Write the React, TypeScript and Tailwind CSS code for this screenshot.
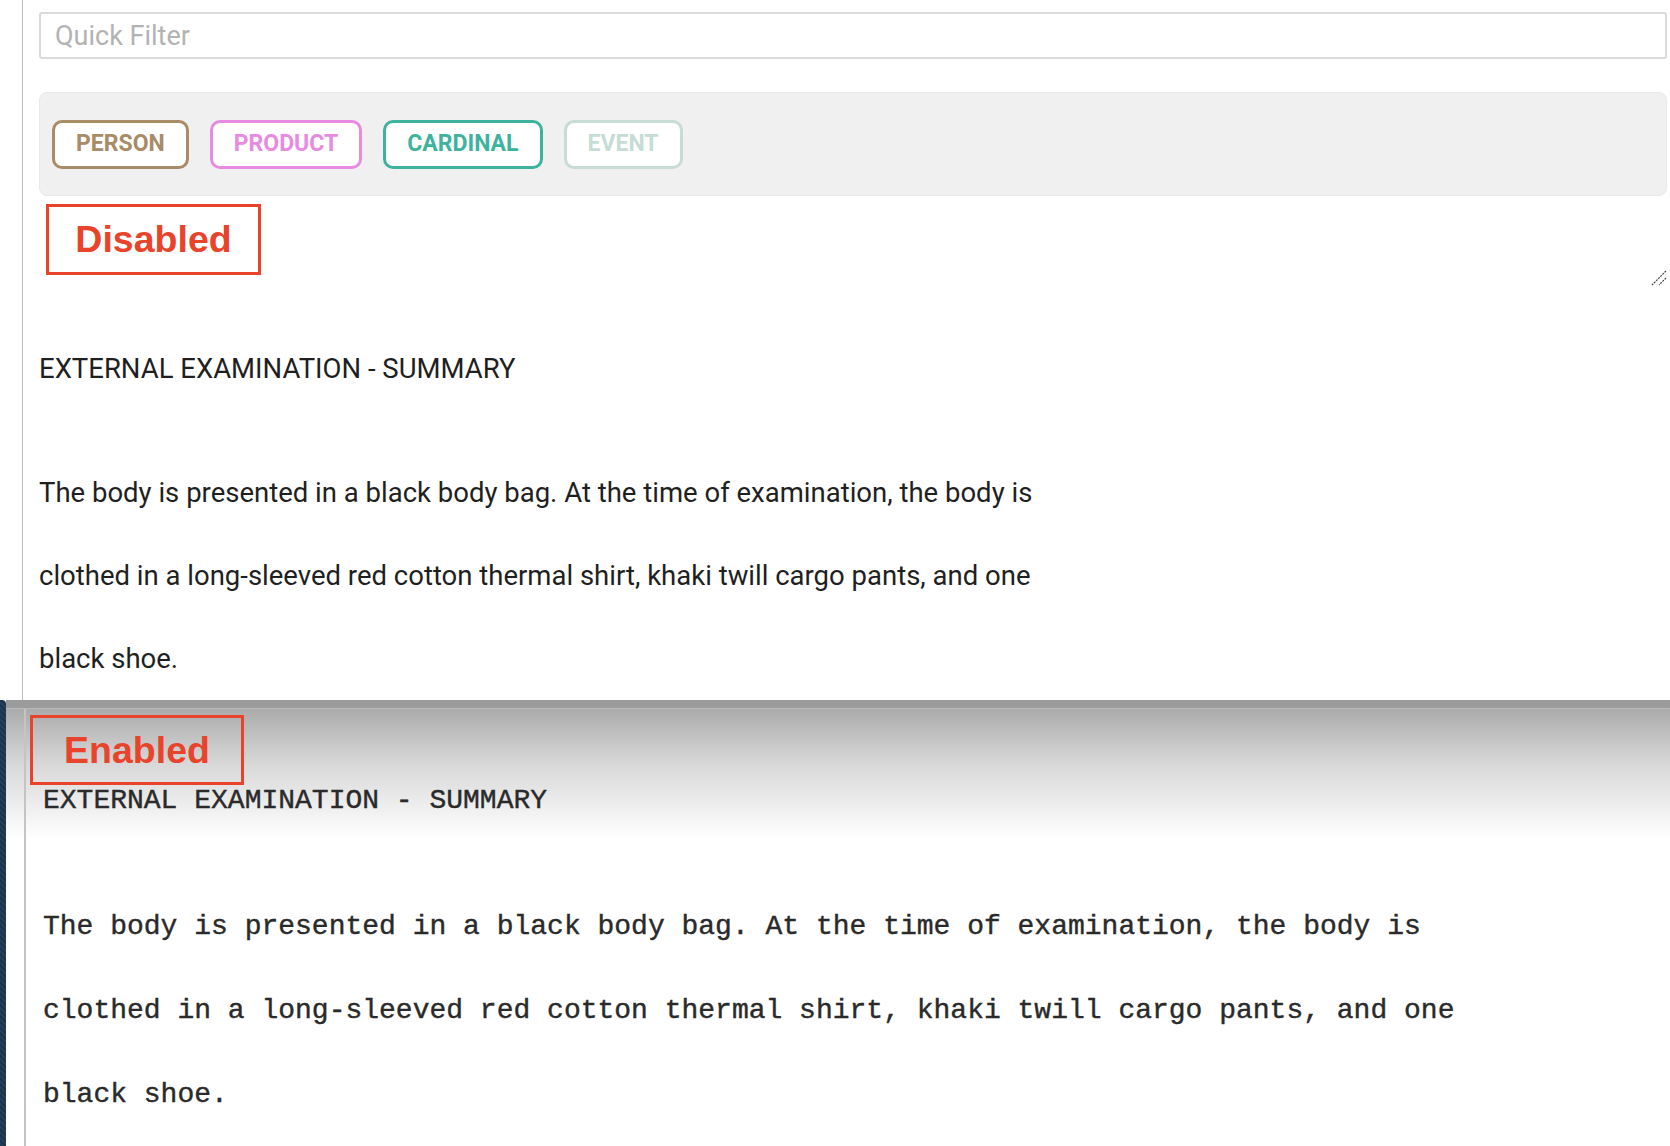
const chips = [
  { label: "PERSON", color: "border-[#a88b67] text-[#a88b67]" },
  { label: "PRODUCT", color: "border-[#e88ae2] text-[#e88ae2]" },
  { label: "CARDINAL", color: "border-[#3db39e] text-[#3db39e]" },
  { label: "EVENT", color: "border-[#c6dcd4] text-[#c6dcd4]" },
];

const bodyLines = [
  "The body is presented in a black body bag. At the time of examination, the body is",
  "clothed in a long-sleeved red cotton thermal shirt, khaki twill cargo pants, and one",
  "black shoe.",
];

const Note = ({ text, className }: { text: string; className: string }) => (
  <div
    className={`absolute flex items-center justify-center border-[3px] border-[#e8442b] text-[#e8442b] font-['Liberation_Sans',Arial,sans-serif] font-bold text-[37.5px] ${className}`}
  >
    {text}
  </div>
);

const App = () => {
  return (
    <div className="w-[1670px] h-[1146px] overflow-hidden bg-white font-['Roboto',sans-serif]">
      {/* disabled editor */}
      <div className="relative flex h-[700px]">
        <div className="w-[23px] border-r border-[#bdbdbd]" />
        <div className="flex-1 flex flex-col pl-[16px] pr-[3px]">
          <input
            placeholder="Quick Filter"
            className="mt-[12px] h-[47px] shrink-0 rounded-[3px] border-2 border-[#dadada] px-[14px] text-[27px] text-[#222] placeholder:text-[#b3b3b3] outline-none"
          />

          <div className="mt-[33px] h-[104px] shrink-0 flex items-center gap-[21px] pl-[12px] rounded-[8px] border border-[#e9e9e9] bg-[#f0f0f0]">
            {chips.map((c) => (
              <div
                key={c.label}
                className={`h-[49px] flex items-center px-[21px] rounded-[10px] border-[3px] bg-white font-bold text-[23px] ${c.color}`}
              >
                {c.label}
              </div>
            ))}
          </div>

          <div className="h-[91px] shrink-0 flex justify-end items-end">
            <svg width="16" height="16" viewBox="0 0 16 16" className="mb-[1px]">
              <path d="M15 1 L1 15" stroke="#444" strokeWidth="1.2" strokeDasharray="2 1" />
              <path d="M15 8 L8 15" stroke="#444" strokeWidth="1.2" strokeDasharray="2 1" />
            </svg>
          </div>

          <div className="mt-[40px] text-[27.5px] leading-[83px] text-[#1f1f1f]">
            EXTERNAL EXAMINATION - SUMMARY
          </div>
          <div className="mt-[41px] text-[27.5px] leading-[83px] text-[#1f1f1f]">
            {bodyLines.map((l) => (
              <div key={l} className="whitespace-pre">
                {l}
              </div>
            ))}
          </div>
        </div>
        <Note text="Disabled" className="left-[46px] top-[204px] w-[215px] h-[71px]" />
      </div>

      {/* enabled editor */}
      <div className="relative flex h-[446px]">
        <div className="w-[6px] rounded-tr-[4px] bg-[#1f3550] bg-[repeating-linear-gradient(45deg,#1d3149_0px,#27415f_2px,#1a2d44_4px)]" />
        <div className="flex-1 flex flex-col">
          <div className="h-[8px] bg-[#9b9b9b]" />
          <div className="h-[1px] bg-[#b9b9b9]" />
          <div className="flex-1 flex bg-[linear-gradient(to_bottom,#ababab_0px,#d8d8d8_55px,#ffffff_130px)]">
            <div className="w-[20px] border-r-2 border-[#c4c4c4]" />
            <div className="flex-1 pl-[17px] pt-[50px] font-['Liberation_Mono','Courier_New',monospace] text-[28px] leading-[84px] text-[#2a2a2a] [-webkit-text-stroke:0.4px_#2a2a2a]">
              <div>EXTERNAL EXAMINATION - SUMMARY</div>
              <div className="mt-[42px]">
                {bodyLines.map((l) => (
                  <div key={l} className="whitespace-pre">
                    {l}
                  </div>
                ))}
              </div>
            </div>
          </div>
        </div>
        <Note text="Enabled" className="left-[30px] top-[15px] w-[214px] h-[70px]" />
      </div>
    </div>
  );
};

export default App;
